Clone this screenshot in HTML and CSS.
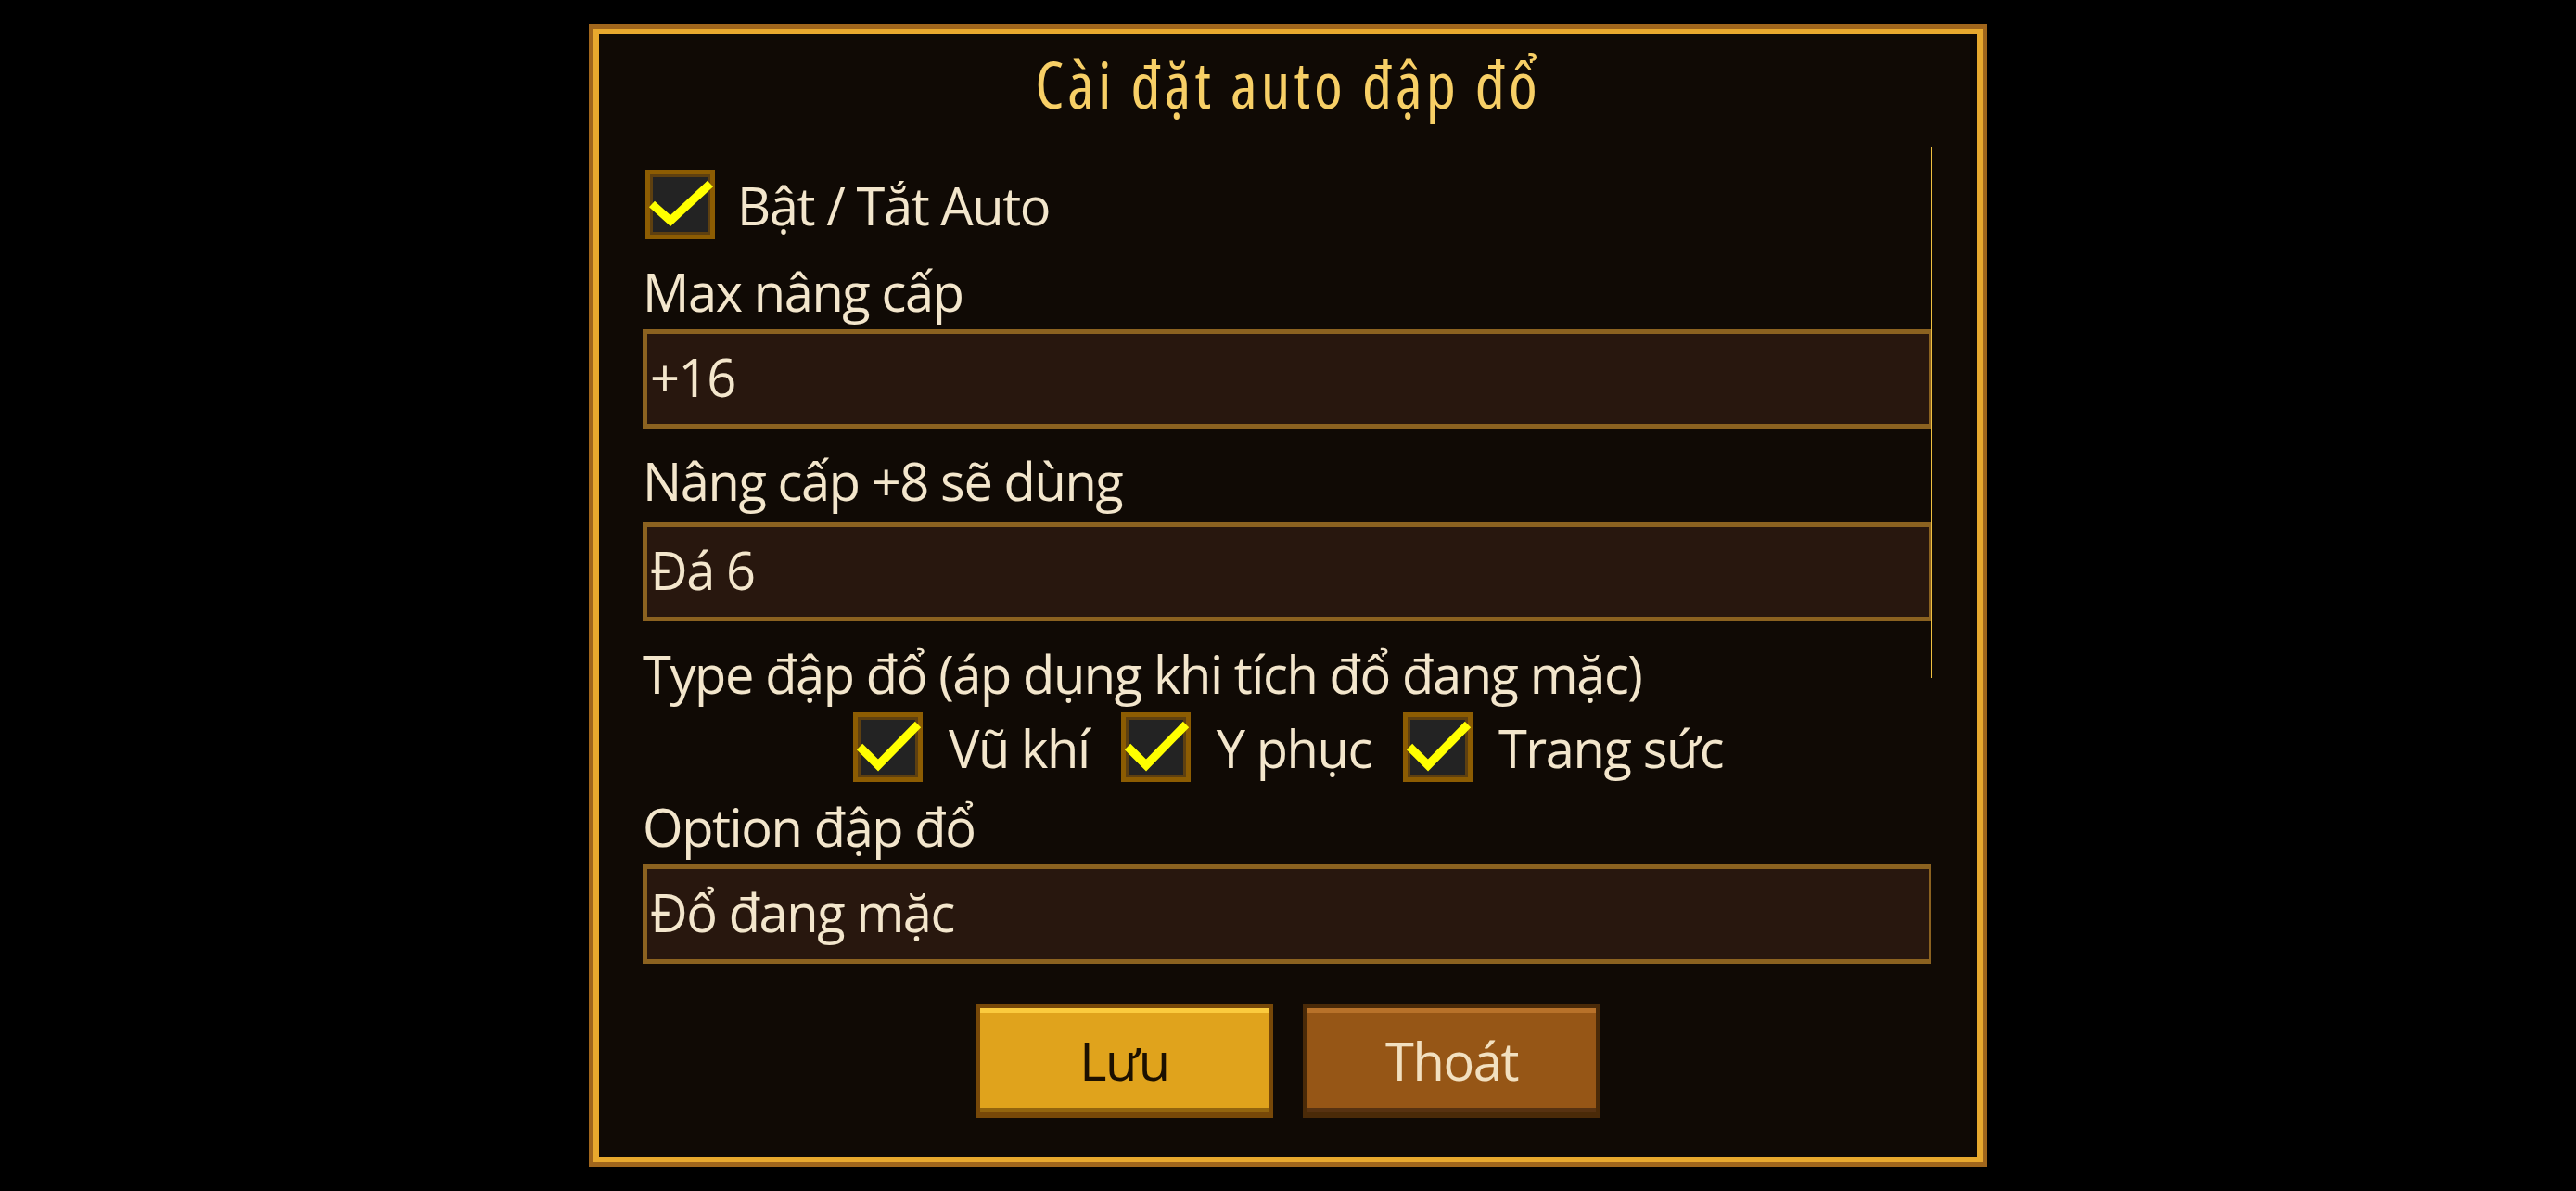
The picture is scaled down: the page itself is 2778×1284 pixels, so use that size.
FILE: index.html
```html
<!DOCTYPE html>
<html lang="vi">
<head>
    <meta charset="UTF-8">
    <meta name="viewport" content="width=device-width, initial-scale=1.0">
    <title>Cài đặt auto đập đổ</title>
    <link rel="stylesheet" href="styles.css">
</head>
<body>
    <div class="dialog">
        <h1 class="title">Cài đặt auto đập đổ</h1>

        <div class="scroll">
            <div class="scroll-content">
                <div class="check-row">
                    <svg class="check" viewBox="0 0 75 75">
                        <rect width="75" height="75" fill="#8c5c02"/>
                        <rect x="5" y="5" width="65" height="65" fill="#5e4010"/>
                        <rect x="8" y="8" width="59" height="59" fill="#232323"/>
                        <polyline points="7,37 27,55 70,15" fill="none" stroke="#ffff00" stroke-width="9"/>
                    </svg>
                    <span>Bật / Tắt Auto</span>
                </div>

                <div class="field">
                    <div class="field-label">Max nâng cấp</div>
                    <div class="field-input">+16</div>
                </div>

                <div class="field field-loose">
                    <div class="field-label">Nâng cấp +8 sẽ dùng</div>
                    <div class="field-input">Đá 6</div>
                </div>

                <div class="field">
                    <div class="field-label">Type đập đổ (áp dụng khi tích đổ đang mặc)</div>
                    <div class="type-row">
                        <div class="type-item">
                            <svg class="check" viewBox="0 0 75 75">
                                <rect width="75" height="75" fill="#8c5c02"/>
                                <rect x="5" y="5" width="65" height="65" fill="#5e4010"/>
                                <rect x="8" y="8" width="59" height="59" fill="#232323"/>
                                <polyline points="7,37 27,57 70,13" fill="none" stroke="#ffff00" stroke-width="9"/>
                            </svg>
                            <span>Vũ khí</span>
                        </div>
                        <div class="type-item">
                            <svg class="check" viewBox="0 0 75 75">
                                <rect width="75" height="75" fill="#8c5c02"/>
                                <rect x="5" y="5" width="65" height="65" fill="#5e4010"/>
                                <rect x="8" y="8" width="59" height="59" fill="#232323"/>
                                <polyline points="7,37 27,57 70,13" fill="none" stroke="#ffff00" stroke-width="9"/>
                            </svg>
                            <span>Y phục</span>
                        </div>
                        <div class="type-item">
                            <svg class="check" viewBox="0 0 75 75">
                                <rect width="75" height="75" fill="#8c5c02"/>
                                <rect x="5" y="5" width="65" height="65" fill="#5e4010"/>
                                <rect x="8" y="8" width="59" height="59" fill="#232323"/>
                                <polyline points="7,37 27,57 70,13" fill="none" stroke="#ffff00" stroke-width="9"/>
                            </svg>
                            <span>Trang sức</span>
                        </div>
                    </div>
                </div>

                <div class="field field-option">
                    <div class="field-label">Option đập đổ</div>
                    <div class="field-input">Đổ đang mặc</div>
                </div>
            </div>
            <div class="scroll-track">
                <div class="scroll-thumb"></div>
            </div>
        </div>

        <div class="actions">
            <button class="btn btn-save">Lưu</button>
            <button class="btn btn-exit">Thoát</button>
        </div>
    </div>
</body>
</html>
```

FILE: styles.css
```css
html, body {
    margin: 0;
    padding: 0;
    height: 100%;
}
body {
    background-color: #000;
    display: flex;
    align-items: center;
    justify-content: center;
    font-family: "Open Sans", "Noto Sans", sans-serif;
    font-stretch: 100%;
    font-size: 56px;
    letter-spacing: -1.4px;
    color: #f3e6cc;
}
.dialog {
    box-sizing: border-box;
    width: 1498px;
    height: 1222px;
    background-color: #100a05;
    border: 6px solid #e8a92e;
    box-shadow: 0 0 0 5px #a0661c;
    display: flex;
    flex-direction: column;
}
.title {
    margin: 11px 0 0;
    font-size: 70px;
    font-stretch: 75%;
    font-weight: 400;
    letter-spacing: 4px;
    line-height: 84px;
    text-align: center;
    color: #f7cf66;
}
.scroll {
    display: flex;
    margin-top: 27px;
    padding: 0 48px 0 47px;
}
.scroll-content {
    flex: 1;
    padding-top: 24px;
}
.scroll-track {
    width: 2px;
}
.scroll-thumb {
    height: 572px;
    background-color: #f0c040;
}
.check {
    width: 75px;
    height: 75px;
    flex-shrink: 0;
    display: block;
}
.check-row {
    display: flex;
    align-items: center;
    gap: 24px;
    height: 75px;
    margin-left: 3px;
    line-height: 76px;
}
.field {
    margin-top: 18px;
}
.field-option {
    margin-top: 10px;
}
.field-label {
    line-height: 76px;
    white-space: nowrap;
}
.field-input {
    box-sizing: border-box;
    height: 107px;
    margin-top: 3px;
    padding: 8px 0 0 3px;
    line-height: 76px;
    background-color: #28170e;
    border: 5px solid #8b6220;
    border-right-width: 2px;
}
.field-loose .field-input {
    margin-top: 7px;
}
.type-row {
    display: flex;
    justify-content: center;
    gap: 34px;
    margin-top: 4px;
    margin-right: -3px;
}
.type-item {
    display: flex;
    align-items: center;
    gap: 28px;
    height: 75px;
    line-height: 76px;
}
.actions {
    display: flex;
    justify-content: center;
    gap: 32px;
    margin-top: 43px;
}
.btn {
    box-sizing: border-box;
    width: 321px;
    height: 123px;
    padding: 0;
    font-family: inherit;
    font-stretch: 100%;
    font-size: 56px;
    letter-spacing: -1.4px;
    border-style: solid;
    border-width: 5px 5px 6px;
    cursor: pointer;
}
.btn-save {
    background-color: #e0a31c;
    border-color: #774808;
    box-shadow: inset 0 5px 0 #fbcb3e, inset 0 -5px 0 #93650e;
    color: #1c1000;
}
.btn-exit {
    background-color: #965616;
    border-color: #4a2a08;
    box-shadow: inset 0 5px 0 #b8722a, inset 0 -5px 0 #573211;
    color: #f2e0c0;
}
```
